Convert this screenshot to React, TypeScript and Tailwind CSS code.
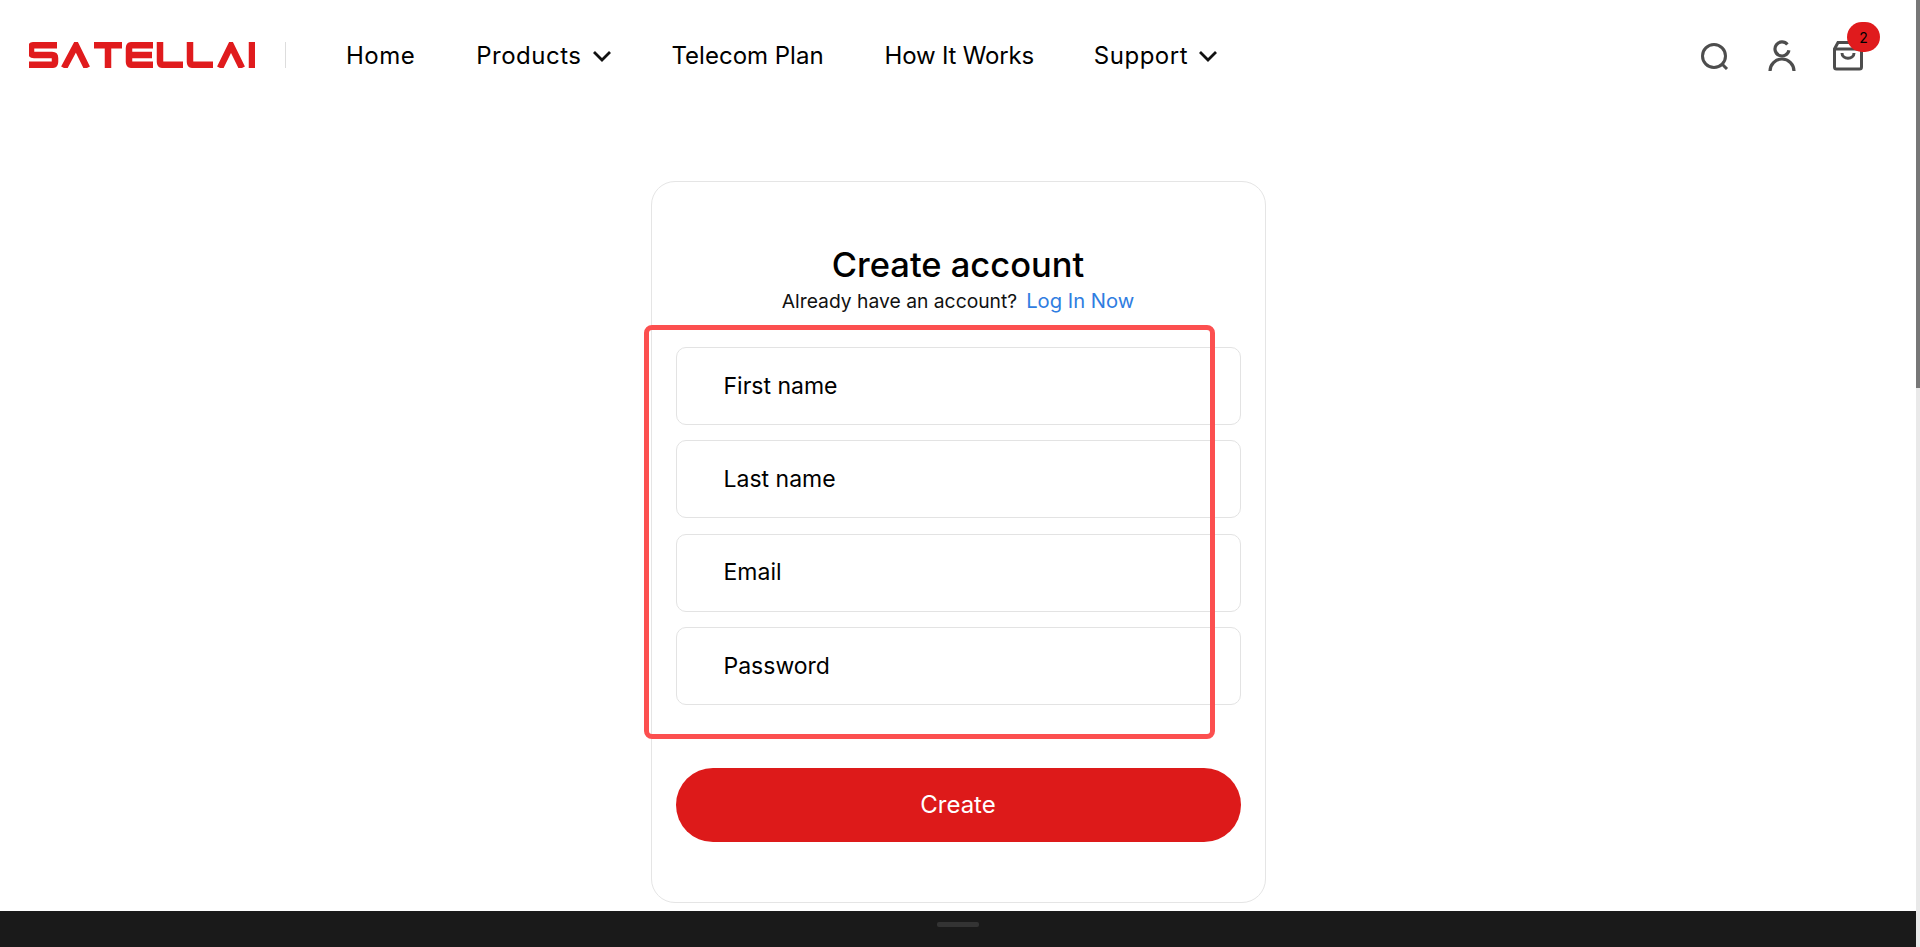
const font = { fontFamily: 'Inter, sans-serif' };

function Chevron() {
  return (
    <svg width="18" height="12" viewBox="0 0 18 12" fill="none" stroke="#111" strokeWidth="2.800" className="ml-[11px]">
      <path d="M1 2l8 8 8-8" />
    </svg>
  );
}

// wordmark, drawn as one red svg
function Logo() {
  return (
    <svg width="226" height="26" viewBox="0 0 226 26" fill="none" stroke="#e01b1d" strokeWidth="6.500">
      <path d="M28 3.200H5Q2 3.200 2 6v4q0 3 3 3h18q3 0 3 3v4q0 2.800-3 2.800H0" />
      <path d="M35 26 47 3.500l11 22.500" />
      <path d="M65 3.200h28M79 3.200V26" />
      <path d="M124 3.200h-21q-3 0-3 3V20q0 2.800 3 2.800h21M100 13h23" />
      <path d="M131 0v20q0 2.800 3 2.800h20" />
      <path d="M161 0v20q0 2.800 3 2.800h20" />
      <path d="M191 26 202 3.500l11 22.500" />
      <path d="M223 0v26" />
    </svg>
  );
}

function Field({ label }: { label: string }) {
  return (
    <div className="flex h-[78px] items-center rounded-[10px] border border-[#e3e3e3] bg-white pl-[47px] text-[23px] text-black">
      {label}
    </div>
  );
}

export default function App() {
  return (
    <div className="relative flex h-[947px] overflow-hidden bg-white" style={font}>
      <div className="flex min-w-0 flex-1 flex-col">
        <header className="flex h-[110px] shrink-0 items-center pl-[29px] pr-[53px]">
          <Logo />
          <div className="ml-[30px] mr-[60px] h-[26px] w-px bg-[#dddddd]" />
          <nav className="mt-[2px] flex items-center gap-[61px] text-[24px] text-black">
            <span className="tracking-[0.5px]">Home</span>
            <span className="flex items-center tracking-[0.5px]">Products<Chevron /></span>
            <span>Telecom Plan</span>
            <span className="tracking-[-0.2px]">How It Works</span>
            <span className="-ml-[1px] flex items-center tracking-[0.5px]">Support<Chevron /></span>
          </nav>
          <div className="ml-auto flex items-center gap-[37px] text-[#4d4d4d]">
            <svg width="30" height="30" viewBox="0 0 30 30" fill="none" stroke="currentColor" strokeWidth="3">
              <circle cx="13" cy="16" r="11.500" />
              <path d="m21.500 24.500 4.500 4.500" />
            </svg>
            <svg width="28" height="34" viewBox="0 0 28 34" fill="none" stroke="currentColor" strokeWidth="3.200">
              <path d="M19.400 6.500A7 7 0 1 0 20.900 12.200" />
              <path d="M2 33a12 12 0 0 1 24 0" />
            </svg>
            <div className="relative mt-[2px]">
              <svg width="30" height="30" viewBox="0 0 30 30" fill="none" stroke="currentColor" strokeWidth="3">
                <path d="M5 1.500h20l3.500 6.500v18q0 2-2 2H3.500q-2 0-2-2V8Z" />
                <path d="M1.500 8h27M9 12c0 7 12 7 12 0" />
              </svg>
              <span className="absolute -top-[19px] left-[14px] flex h-[30px] w-[33px] items-center justify-center rounded-full bg-[#e01b1d] text-[14px] text-black">
                2
              </span>
            </div>
          </div>
        </header>

        <main className="flex flex-1 justify-center pt-[71px]">
          <div className="flex h-[722px] w-[615px] flex-col rounded-[24px] border border-[#e5e5e5] px-[24px] pt-[62px]">
            <h1 className="text-center text-[34.500px] leading-[42px] font-medium text-black">Create account</h1>
            <p className="mt-[1px] text-center text-[19.300px] leading-[28px] text-[#111]">
              Already have an account?<span className="ml-[9px] text-[20.200px] text-[#2f7de1]">Log In Now</span>
            </p>
            <div className="mt-[32px] flex flex-col gap-[15.300px]">
              <Field label="First name" />
              <Field label="Last name" />
              <Field label="Email" />
              <Field label="Password" />
            </div>
            <button className="mt-[63px] h-[74px] rounded-full bg-[#dd1a1a] text-[24px] text-white">Create</button>
          </div>
        </main>

        <footer className="flex h-[36px] shrink-0 justify-center bg-[#1a1a1a] pt-[11px]">
          <div className="h-[5px] w-[42px] rounded-[2px] bg-[#333333]" />
        </footer>
      </div>

      {/* scrollbar */}
      <div className="w-[4px] shrink-0 bg-[#e9e9e9]">
        <div className="h-[388px] bg-[#777777]" />
      </div>

      {/* annotation drawn over the form */}
      <div className="absolute left-[644px] top-[325px] h-[414px] w-[571px] rounded-[8px] border-[5px] border-[#fc4f4f]" />
    </div>
  );
}
